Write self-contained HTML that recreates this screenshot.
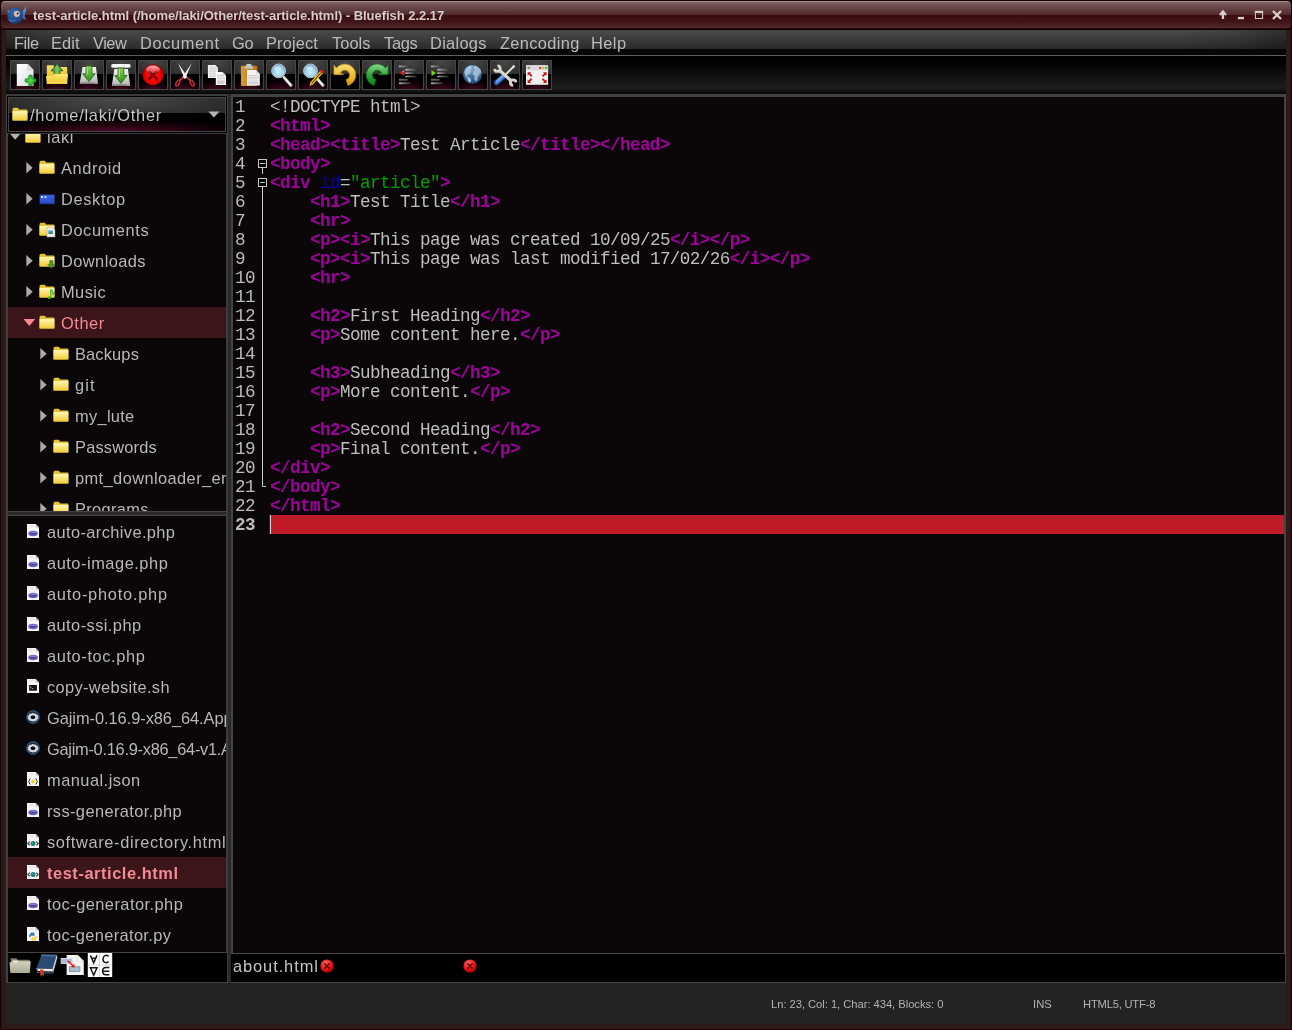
<!DOCTYPE html>
<html><head><meta charset="utf-8"><title>Bluefish</title>
<style>
html,body{margin:0;padding:0}
body{width:1292px;height:1030px;position:relative;overflow:hidden;background:#2b1b1b;font-family:"Liberation Sans",sans-serif}
.t{will-change:transform;position:absolute;white-space:pre;margin:0;padding:0}
svg{position:absolute;overflow:visible}

.tb{position:absolute;top:60px;width:28px;height:28px;border:1px solid #474747;
 background:radial-gradient(ellipse 75% 38% at 50% 104%,#4a0a26 0,rgba(60,4,28,.55) 50%,rgba(0,0,0,0) 100%),linear-gradient(rgba(0,0,0,0) 0,rgba(0,0,0,0) 46.5%,#000 46.5%,#000 100%),radial-gradient(ellipse 85% 75% at 50% 0%,#494949 0,#262626 100%)}
.tb.ng{background:linear-gradient(rgba(0,0,0,0) 0,rgba(0,0,0,0) 46.5%,#000 46.5%,#000 100%),radial-gradient(ellipse 85% 75% at 50% 0%,#494949 0,#282828 100%)}
.row{position:absolute;left:8px;width:219px;height:31px;background:#3b1519}

</style></head><body>
<div style="position:absolute;left:0px;top:0px;width:1292px;height:1030px;background:#2b1b1b"></div>
<div style="position:absolute;left:0px;top:0px;width:1px;height:1030px;background:#180507"></div>
<div style="position:absolute;left:1px;top:0px;width:1px;height:1030px;background:#300b0f"></div>
<div style="position:absolute;left:1291px;top:0px;width:1px;height:1030px;background:#180507"></div>
<div style="position:absolute;left:1290px;top:0px;width:1px;height:1030px;background:#300b0f"></div>
<div style="position:absolute;left:0px;top:1028px;width:1292px;height:1px;background:#3c1014"></div>
<div style="position:absolute;left:0px;top:1029px;width:1292px;height:1px;background:#200608"></div>
<div style="position:absolute;left:0px;top:0px;width:1292px;height:30px;background:#14040a"></div>
<div style="position:absolute;left:1px;top:1px;width:1290px;height:27px;border-radius:4px 4px 3px 3px;background:linear-gradient(#a48e8e 0,#a48e8e 1px,#7e6061 1px,#4e282b 14px,#3b0c10 14px,#3f1519 21px,#4f2729 26px,#512b2d 27px);"></div>
<div style="position:absolute;left:1px;top:28px;width:1290px;height:1px;background:#2a080a"></div>
<div style="position:absolute;left:0px;top:29px;width:1292px;height:1px;background:#0a0000"></div>
<div class="t" style="left:33.27px;top:8.00px;font:bold 13.00px/15px 'Liberation Sans';letter-spacing:-0.039px;color:#d6cccc;">test-article.html (/home/laki/Other/test-article.html) - Bluefish 2.2.17</div>
<svg style="left:4px;top:3px" width="26" height="24" viewBox="4 3 26 24"><defs><radialGradient id="fb" cx=".42" cy=".3" r=".8"><stop offset="0" stop-color="#3769a8"/><stop offset=".6" stop-color="#244c88"/><stop offset="1" stop-color="#152f58"/></radialGradient></defs><path d="M21 13.400Q23.400 9.600 26.200 6.200Q26.100 10.400 24.800 14.200Q24.500 16.800 26.200 19.800Q23.400 19.400 21.200 17.400z" fill="#4274b4"/><path d="M23.200 11Q24.800 8.800 26.200 6.200Q26.100 10.400 24.800 14.200z" fill="#6090cc"/><ellipse cx="15.150" cy="15.800" rx="7.850" ry="8.300" fill="url(#fb)"/><path d="M7.900 13.600Q6.900 11.200 7.900 9.400Q9.200 10.200 9.800 11.200z" fill="#4c7cba"/><path d="M8.200 18.900Q12.400 21.600 16.900 19.400Q13 23 9 20.800z" fill="#4474b2"/><ellipse cx="16.850" cy="13.800" rx="3.050" ry="3.100" fill="#c9bfbb"/><circle cx="17.700" cy="13.500" r=".95" fill="#1a1a22"/></svg>
<svg style="left:1215px;top:6px" width="72" height="18" viewBox="1215 6 72 18"><g stroke="#dccdcd" fill="none" stroke-width="2.2"><path d="M1222.950 18.900V12M1219.900 14.900L1222.950 11.500L1226 14.900" stroke-linecap="butt" stroke-linejoin="miter" stroke-width="2.300"/><path d="M1237.900 18.050h6.100" stroke-width="2.300"/><rect x="1255.400" y="11.400" width="7.200" height="7.100" stroke-width="1"/><path d="M1254.900 11.950h8.200" stroke-width="2.100"/><path d="M1273 11l8 8M1281 11l-8 8" stroke-width="2.300"/></g></svg>
<div style="position:absolute;left:6px;top:30px;width:1280px;height:19px;background:linear-gradient(to right,rgba(0,0,0,.36) 0,rgba(0,0,0,.12) 50px,rgba(0,0,0,0) 110px,rgba(0,0,0,0) 1170px,rgba(0,0,0,.12) 1230px,rgba(0,0,0,.36) 100%),linear-gradient(#474747 0,#484848 2px,#2b2b2b 100%)"></div>
<div style="position:absolute;left:6px;top:49px;width:1280px;height:6px;background:#070707"></div>
<div style="position:absolute;left:6px;top:55px;width:1280px;height:1px;background:#5e5e5e"></div>
<div class="t" style="left:13.79px;top:34.00px;font:normal 16.40px/18px 'Liberation Sans';letter-spacing:-0.418px;color:#bababa;">File</div>
<div class="t" style="left:50.79px;top:34.00px;font:normal 16.40px/18px 'Liberation Sans';letter-spacing:0.095px;color:#bababa;">Edit</div>
<div class="t" style="left:92.82px;top:34.00px;font:normal 16.40px/18px 'Liberation Sans';letter-spacing:-0.459px;color:#bababa;">View</div>
<div class="t" style="left:139.89px;top:34.00px;font:normal 16.40px/18px 'Liberation Sans';letter-spacing:0.627px;color:#bababa;">Document</div>
<div class="t" style="left:232.28px;top:34.00px;font:normal 16.40px/18px 'Liberation Sans';letter-spacing:-0.318px;color:#bababa;">Go</div>
<div class="t" style="left:266.19px;top:34.00px;font:normal 16.40px/18px 'Liberation Sans';letter-spacing:0.148px;color:#bababa;">Project</div>
<div class="t" style="left:331.77px;top:34.00px;font:normal 16.40px/18px 'Liberation Sans';letter-spacing:0.052px;color:#bababa;">Tools</div>
<div class="t" style="left:383.77px;top:34.00px;font:normal 16.40px/18px 'Liberation Sans';letter-spacing:-0.267px;color:#bababa;">Tags</div>
<div class="t" style="left:430.09px;top:34.00px;font:normal 16.40px/18px 'Liberation Sans';letter-spacing:0.299px;color:#bababa;">Dialogs</div>
<div class="t" style="left:499.61px;top:34.00px;font:normal 16.40px/18px 'Liberation Sans';letter-spacing:0.359px;color:#bababa;">Zencoding</div>
<div class="t" style="left:590.59px;top:34.00px;font:normal 16.40px/18px 'Liberation Sans';letter-spacing:0.455px;color:#bababa;">Help</div>
<div style="position:absolute;left:6px;top:56px;width:1280px;height:38px;background:linear-gradient(#000 0,#000 12%,#1e1e1e 84%,#0c0c0c 96%,#050505 100%)"></div>
<div class="tb" style="left:10px"></div>
<div class="tb" style="left:42px"></div>
<div class="tb" style="left:74px"></div>
<div class="tb" style="left:106px"></div>
<div class="tb" style="left:138px"></div>
<div class="tb" style="left:170px"></div>
<div class="tb" style="left:202px"></div>
<div class="tb" style="left:234px"></div>
<div class="tb" style="left:266px"></div>
<div class="tb" style="left:298px"></div>
<div class="tb ng" style="left:330px"></div>
<div class="tb ng" style="left:362px"></div>
<div class="tb" style="left:394px"></div>
<div class="tb" style="left:426px"></div>
<div class="tb" style="left:458px"></div>
<div class="tb" style="left:490px"></div>
<div class="tb" style="left:522px"></div>
<div style="position:absolute;left:6px;top:94px;width:1280px;height:889px;background:#000"></div>
<div style="position:absolute;left:6px;top:94px;width:222px;height:2px;background:#3a3a3a"></div>
<div style="position:absolute;left:6px;top:94px;width:2px;height:888px;background:#414141"></div>
<div style="position:absolute;left:227px;top:96px;width:1px;height:886px;background:#3c3c3c"></div>
<div style="position:absolute;left:226px;top:133px;width:1px;height:820px;background:#3c3c3c"></div>
<div style="position:absolute;left:228px;top:94px;width:3px;height:889px;background:#272727 repeating-linear-gradient(#2f2f2f 0,#2f2f2f 1px,#252525 1px,#252525 2px)"></div>
<div style="position:absolute;left:7px;top:96px;width:1px;height:37px;background:#000"></div>
<div style="position:absolute;left:8px;top:97px;width:218px;height:35px;box-sizing:border-box;border:1px solid #464646;background:radial-gradient(ellipse 62% 42% at 50% 106%,#5c0a2e 0,rgba(70,6,32,.5) 55%,rgba(0,0,0,0) 100%),linear-gradient(rgba(0,0,0,0) 0,rgba(0,0,0,0) 46%,#000 46%,#000 100%),radial-gradient(ellipse 75% 95% at 50% 0%,#4c4c4c 0,#1e1e1e 100%)"></div>
<div class="t" style="left:30.00px;top:106.00px;font:normal 16.40px/18px 'Liberation Sans';letter-spacing:0.730px;color:#c6c6c6;">/home/laki/Other</div>
<svg style="left:208px;top:111px" width="12" height="7"><path d="M0.3 0.6h11.2L5.9 6.6z" fill="#b4b4b4"/></svg>
<div style="position:absolute;left:8px;top:134px;width:218px;height:377px;background:#0b0708;overflow:hidden"></div>
<div style="position:absolute;left:8px;top:133px;width:218px;height:1px;background:#3a3a3a"></div>
<div style="position:absolute;left:8px;top:511px;width:218px;height:1px;background:#444"></div>
<div style="position:absolute;left:8px;top:512px;width:218px;height:3px;background:#2a2a2a"></div>
<div style="position:absolute;left:8px;top:515px;width:218px;height:1px;background:#444"></div>
<div style="position:absolute;left:8px;top:516px;width:218px;height:436px;background:#0b0708"></div>
<div style="position:absolute;left:8px;top:952px;width:218px;height:1px;background:#444"></div>
<div style="position:absolute;left:8px;top:953px;width:219px;height:29px;background:#000"></div>
<div style="position:absolute;left:6px;top:982px;width:222px;height:1px;background:#444"></div>
<div style="position:absolute;left:231px;top:94px;width:1055px;height:3px;background:#424242"></div>
<div style="position:absolute;left:231px;top:94px;width:2px;height:860px;background:#444"></div>
<div style="position:absolute;left:1284px;top:94px;width:2px;height:889px;background:#444"></div>
<div style="position:absolute;left:233px;top:97px;width:1051px;height:856px;background:#0b0708"></div>
<div style="position:absolute;left:231px;top:953px;width:1055px;height:1px;background:#484848"></div>
<div style="position:absolute;left:232px;top:954px;width:1053px;height:28px;background:#000"></div>
<div style="position:absolute;left:231px;top:982px;width:1055px;height:1px;background:#484848"></div>
<div style="position:absolute;left:6px;top:983px;width:1280px;height:41px;background:#232323"></div>
<div class="t" style="left:770.80px;top:998.00px;font:normal 11.20px/12px 'Liberation Sans';letter-spacing:-0.031px;color:#b2b2b2;">Ln: 23, Col: 1, Char: 434, Blocks: 0</div>
<div class="t" style="left:1033.39px;top:998.00px;font:normal 11.20px/12px 'Liberation Sans';letter-spacing:0.032px;color:#b2b2b2;">INS</div>
<div class="t" style="left:1082.70px;top:998.00px;font:normal 11.20px/12px 'Liberation Sans';letter-spacing:-0.200px;color:#b2b2b2;">HTML5, UTF-8</div>
<svg width="0" height="0" style="left:0;top:0"><defs><linearGradient id="fg" x1="0" y1="0" x2="0" y2="1"><stop offset="0" stop-color="#fff7b6"/><stop offset="1" stop-color="#f2cc35"/></linearGradient></defs></svg>
<div style="position:absolute;left:8px;top:134px;width:218px;height:377px;overflow:hidden">
<div style="position:absolute;left:-8px;top:-134px">
<div style="position:absolute;left:8px;top:307px;width:218px;height:31px;background:#3b1519"></div>
<svg style="left:9px;top:133px" width="13" height="8"><path d="M0.4 0H12L6.2 6.8z" fill="#b4b4b4"/></svg>
<svg style="left:25px;top:129px" width="17" height="18" viewBox="0 0 17 18"><path d="M0.5 2.600Q0.5 0.8 2 0.8H5.400Q6.300 0.8 6.800 2.200L7 2.600H14.400Q15.400 2.600 15.400 3.600V12.700Q15.400 13.600 14.500 13.600H1.400Q0.5 13.600 0.5 12.700z" fill="#e6c13a"/><path d="M0.5 3.900H15.400V12.700Q15.400 13.600 14.500 13.600H1.400Q0.5 13.600 0.5 12.700z" fill="url(#fg)"/></svg>
<div class="t" style="left:47.00px;top:128.00px;font:normal 16.40px/18px 'Liberation Sans';letter-spacing:0.589px;color:#b8b8b8;">laki</div>
<svg style="left:26px;top:162px" width="8" height="12"><path d="M0.3 0V11.400L6.700 5.700z" fill="#aaaaaa"/></svg>
<svg style="left:39px;top:160px" width="17" height="18" viewBox="0 0 17 18"><path d="M0.5 2.600Q0.5 0.8 2 0.8H5.400Q6.300 0.8 6.800 2.200L7 2.600H14.400Q15.400 2.600 15.400 3.600V12.700Q15.400 13.600 14.500 13.600H1.400Q0.5 13.600 0.5 12.700z" fill="#e6c13a"/><path d="M0.5 3.900H15.400V12.700Q15.400 13.600 14.500 13.600H1.400Q0.5 13.600 0.5 12.700z" fill="url(#fg)"/></svg>
<div class="t" style="left:61.00px;top:159.00px;font:normal 16.40px/18px 'Liberation Sans';letter-spacing:0.611px;color:#b8b8b8;">Android</div>
<svg style="left:26px;top:193px" width="8" height="12"><path d="M0.3 0V11.400L6.700 5.700z" fill="#aaaaaa"/></svg>
<svg style="left:39px;top:191px" width="17" height="18" viewBox="0 0 17 18"><rect x="0.4" y="3.3" width="15.4" height="10" fill="#1f2f66"/><rect x="1.1" y="4" width="14" height="8.4" fill="#2a52d2"/><path d="M1.1 4H15.1V7L1.1 10z" fill="#3b66e4" opacity=".6"/><circle cx="3" cy="6" r="1.1" fill="#fff"/><circle cx="6.4" cy="6" r="1.1" fill="#e8eeff"/></svg>
<div class="t" style="left:61.00px;top:190.00px;font:normal 16.40px/18px 'Liberation Sans';letter-spacing:0.658px;color:#b8b8b8;">Desktop</div>
<svg style="left:26px;top:224px" width="8" height="12"><path d="M0.3 0V11.400L6.700 5.700z" fill="#aaaaaa"/></svg>
<svg style="left:39px;top:222px" width="17" height="18" viewBox="0 0 17 18"><path d="M0.5 2.600Q0.5 0.8 2 0.8H5.400Q6.300 0.8 6.800 2.200L7 2.600H14.400Q15.400 2.600 15.400 3.600V12.700Q15.400 13.600 14.500 13.600H1.400Q0.5 13.600 0.5 12.700z" fill="#e6c13a"/><path d="M0.5 3.900H15.400V12.700Q15.400 13.600 14.500 13.600H1.400Q0.5 13.600 0.5 12.700z" fill="url(#fg)"/><path d="M8 5.2H13.2L16 8V15H8z" fill="#eeeeee" stroke="#9a9a9a" stroke-width=".5"/><rect x="9.4" y="8.4" width="4.6" height="3.4" fill="#4aa0d8"/><path d="M9.400 11.800l1.600-1.800 1.200 1 1-.8.800 1.600z" fill="#3a7a3a"/></svg>
<div class="t" style="left:61.00px;top:221.00px;font:normal 16.40px/18px 'Liberation Sans';letter-spacing:0.586px;color:#b8b8b8;">Documents</div>
<svg style="left:26px;top:255px" width="8" height="12"><path d="M0.3 0V11.400L6.700 5.700z" fill="#aaaaaa"/></svg>
<svg style="left:39px;top:253px" width="17" height="18" viewBox="0 0 17 18"><path d="M0.5 2.600Q0.5 0.8 2 0.8H5.400Q6.300 0.8 6.800 2.200L7 2.600H14.400Q15.400 2.600 15.400 3.600V12.700Q15.400 13.600 14.500 13.600H1.400Q0.5 13.600 0.5 12.700z" fill="#e6c13a"/><path d="M0.5 3.900H15.400V12.700Q15.400 13.600 14.500 13.600H1.400Q0.5 13.600 0.5 12.700z" fill="url(#fg)"/><path d="M10.800 7.600H13.800V11.400H15.800L12.300 15.200L8.800 11.400H10.800z" fill="#4a9a30" stroke="#2a6a1c" stroke-width=".6"/></svg>
<div class="t" style="left:61.00px;top:252.00px;font:normal 16.40px/18px 'Liberation Sans';letter-spacing:0.434px;color:#b8b8b8;">Downloads</div>
<svg style="left:26px;top:286px" width="8" height="12"><path d="M0.3 0V11.400L6.700 5.700z" fill="#aaaaaa"/></svg>
<svg style="left:39px;top:284px" width="17" height="18" viewBox="0 0 17 18"><path d="M0.5 2.600Q0.5 0.8 2 0.8H5.400Q6.300 0.8 6.800 2.200L7 2.600H14.400Q15.400 2.600 15.400 3.600V12.700Q15.400 13.600 14.500 13.600H1.400Q0.5 13.600 0.5 12.700z" fill="#e6c13a"/><path d="M0.5 3.900H15.400V12.700Q15.400 13.600 14.500 13.600H1.400Q0.5 13.600 0.5 12.700z" fill="url(#fg)"/><g fill="#2fae22" stroke="#2fae22"><path d="M11.800 5.600V13.400" stroke-width="1.100"/><path d="M11.800 5.600Q14.600 7.600 14.200 11" fill="none" stroke-width="1.100"/><ellipse cx="10.400" cy="13.800" rx="1.700" ry="1.200" stroke="none"/></g></svg>
<div class="t" style="left:61.00px;top:283.00px;font:normal 16.40px/18px 'Liberation Sans';letter-spacing:0.452px;color:#b8b8b8;">Music</div>
<svg style="left:23px;top:319px" width="13" height="8"><path d="M0.5 0H12.200L6.350 6.900z" fill="#f58a95"/></svg>
<svg style="left:39px;top:315px" width="17" height="18" viewBox="0 0 17 18"><path d="M0.5 2.600Q0.5 0.8 2 0.8H5.400Q6.300 0.8 6.800 2.200L7 2.600H14.400Q15.400 2.600 15.400 3.600V12.700Q15.400 13.600 14.500 13.600H1.400Q0.5 13.600 0.5 12.700z" fill="#e6c13a"/><path d="M0.5 3.900H15.400V12.700Q15.400 13.600 14.500 13.600H1.400Q0.5 13.600 0.5 12.700z" fill="url(#fg)"/></svg>
<div class="t" style="left:61.00px;top:314.00px;font:normal 16.40px/18px 'Liberation Sans';letter-spacing:0.562px;color:#f58a95;">Other</div>
<svg style="left:40px;top:348px" width="8" height="12"><path d="M0.3 0V11.400L6.700 5.700z" fill="#aaaaaa"/></svg>
<svg style="left:53px;top:346px" width="17" height="18" viewBox="0 0 17 18"><path d="M0.5 2.600Q0.5 0.8 2 0.8H5.400Q6.300 0.8 6.800 2.200L7 2.600H14.400Q15.400 2.600 15.400 3.600V12.700Q15.400 13.600 14.500 13.600H1.400Q0.5 13.600 0.5 12.700z" fill="#e6c13a"/><path d="M0.5 3.900H15.400V12.700Q15.400 13.600 14.500 13.600H1.400Q0.5 13.600 0.5 12.700z" fill="url(#fg)"/></svg>
<div class="t" style="left:75.00px;top:345.00px;font:normal 16.40px/18px 'Liberation Sans';letter-spacing:0.163px;color:#b8b8b8;">Backups</div>
<svg style="left:40px;top:379px" width="8" height="12"><path d="M0.3 0V11.400L6.700 5.700z" fill="#aaaaaa"/></svg>
<svg style="left:53px;top:377px" width="17" height="18" viewBox="0 0 17 18"><path d="M0.5 2.600Q0.5 0.8 2 0.8H5.400Q6.300 0.8 6.800 2.200L7 2.600H14.400Q15.400 2.600 15.400 3.600V12.700Q15.400 13.600 14.500 13.600H1.400Q0.5 13.600 0.5 12.700z" fill="#e6c13a"/><path d="M0.5 3.900H15.400V12.700Q15.400 13.600 14.500 13.600H1.400Q0.5 13.600 0.5 12.700z" fill="url(#fg)"/></svg>
<div class="t" style="left:75.00px;top:376.00px;font:normal 16.40px/18px 'Liberation Sans';letter-spacing:1.140px;color:#b8b8b8;">git</div>
<svg style="left:40px;top:410px" width="8" height="12"><path d="M0.3 0V11.400L6.700 5.700z" fill="#aaaaaa"/></svg>
<svg style="left:53px;top:408px" width="17" height="18" viewBox="0 0 17 18"><path d="M0.5 2.600Q0.5 0.8 2 0.8H5.400Q6.300 0.8 6.800 2.200L7 2.600H14.400Q15.400 2.600 15.400 3.600V12.700Q15.400 13.600 14.500 13.600H1.400Q0.5 13.600 0.5 12.700z" fill="#e6c13a"/><path d="M0.5 3.900H15.400V12.700Q15.400 13.600 14.500 13.600H1.400Q0.5 13.600 0.5 12.700z" fill="url(#fg)"/></svg>
<div class="t" style="left:75.00px;top:407.00px;font:normal 16.40px/18px 'Liberation Sans';letter-spacing:0.306px;color:#b8b8b8;">my_lute</div>
<svg style="left:40px;top:441px" width="8" height="12"><path d="M0.3 0V11.400L6.700 5.700z" fill="#aaaaaa"/></svg>
<svg style="left:53px;top:439px" width="17" height="18" viewBox="0 0 17 18"><path d="M0.5 2.600Q0.5 0.8 2 0.8H5.400Q6.300 0.8 6.800 2.200L7 2.600H14.400Q15.400 2.600 15.400 3.600V12.700Q15.400 13.600 14.500 13.600H1.400Q0.5 13.600 0.5 12.700z" fill="#e6c13a"/><path d="M0.5 3.900H15.400V12.700Q15.400 13.600 14.500 13.600H1.400Q0.5 13.600 0.5 12.700z" fill="url(#fg)"/></svg>
<div class="t" style="left:75.00px;top:438.00px;font:normal 16.40px/18px 'Liberation Sans';letter-spacing:0.197px;color:#b8b8b8;">Passwords</div>
<svg style="left:40px;top:472px" width="8" height="12"><path d="M0.3 0V11.400L6.700 5.700z" fill="#aaaaaa"/></svg>
<svg style="left:53px;top:470px" width="17" height="18" viewBox="0 0 17 18"><path d="M0.5 2.600Q0.5 0.8 2 0.8H5.400Q6.300 0.8 6.800 2.200L7 2.600H14.400Q15.400 2.600 15.400 3.600V12.700Q15.400 13.600 14.500 13.600H1.400Q0.5 13.600 0.5 12.700z" fill="#e6c13a"/><path d="M0.5 3.900H15.400V12.700Q15.400 13.600 14.500 13.600H1.400Q0.5 13.600 0.5 12.700z" fill="url(#fg)"/></svg>
<div class="t" style="left:75.00px;top:469.00px;font:normal 16.40px/18px 'Liberation Sans';letter-spacing:0.416px;color:#b8b8b8;">pmt_downloader_er</div>
<svg style="left:40px;top:503px" width="8" height="12"><path d="M0.3 0V11.400L6.700 5.700z" fill="#aaaaaa"/></svg>
<svg style="left:53px;top:501px" width="17" height="18" viewBox="0 0 17 18"><path d="M0.5 2.600Q0.5 0.8 2 0.8H5.400Q6.300 0.8 6.800 2.200L7 2.600H14.400Q15.400 2.600 15.400 3.600V12.700Q15.400 13.600 14.500 13.600H1.400Q0.5 13.600 0.5 12.700z" fill="#e6c13a"/><path d="M0.5 3.900H15.400V12.700Q15.400 13.600 14.500 13.600H1.400Q0.5 13.600 0.5 12.700z" fill="url(#fg)"/></svg>
<div class="t" style="left:75.00px;top:500.00px;font:normal 16.40px/18px 'Liberation Sans';letter-spacing:0.354px;color:#b8b8b8;">Programs</div>
</div></div>
<div style="position:absolute;left:8px;top:516px;width:218px;height:436px;overflow:hidden">
<div style="position:absolute;left:-8px;top:-516px">
<svg style="left:25px;top:524px" width="16" height="16" viewBox="0 0 16 16"><path d="M2 0H10.600L14 3.400V14H2z" fill="#f6f6f6"/><path d="M10.600 0V3.400H14z" fill="#c2c2c2"/><path d="M3.400 1.400H9M3.400 2.800H9" stroke="#dcdcdc" stroke-width=".7"/><ellipse cx="8.100" cy="9.500" rx="4.800" ry="2.700" fill="#6f62bd"/><ellipse cx="8.100" cy="9.700" rx="3.200" ry="1.100" fill="#4e4399"/><ellipse cx="8.100" cy="8.300" rx="3" ry=".8" fill="#9a8fdc" opacity=".8"/></svg>
<div class="t" style="left:47.10px;top:523.00px;font:normal 16.40px/18px 'Liberation Sans';letter-spacing:0.392px;color:#b8b8b8;">auto-archive.php</div>
<svg style="left:25px;top:555px" width="16" height="16" viewBox="0 0 16 16"><path d="M2 0H10.600L14 3.400V14H2z" fill="#f6f6f6"/><path d="M10.600 0V3.400H14z" fill="#c2c2c2"/><path d="M3.400 1.400H9M3.400 2.800H9" stroke="#dcdcdc" stroke-width=".7"/><ellipse cx="8.100" cy="9.500" rx="4.800" ry="2.700" fill="#6f62bd"/><ellipse cx="8.100" cy="9.700" rx="3.200" ry="1.100" fill="#4e4399"/><ellipse cx="8.100" cy="8.300" rx="3" ry=".8" fill="#9a8fdc" opacity=".8"/></svg>
<div class="t" style="left:47.10px;top:554.00px;font:normal 16.40px/18px 'Liberation Sans';letter-spacing:0.529px;color:#b8b8b8;">auto-image.php</div>
<svg style="left:25px;top:586px" width="16" height="16" viewBox="0 0 16 16"><path d="M2 0H10.600L14 3.400V14H2z" fill="#f6f6f6"/><path d="M10.600 0V3.400H14z" fill="#c2c2c2"/><path d="M3.400 1.400H9M3.400 2.800H9" stroke="#dcdcdc" stroke-width=".7"/><ellipse cx="8.100" cy="9.500" rx="4.800" ry="2.700" fill="#6f62bd"/><ellipse cx="8.100" cy="9.700" rx="3.200" ry="1.100" fill="#4e4399"/><ellipse cx="8.100" cy="8.300" rx="3" ry=".8" fill="#9a8fdc" opacity=".8"/></svg>
<div class="t" style="left:47.10px;top:585.00px;font:normal 16.40px/18px 'Liberation Sans';letter-spacing:0.751px;color:#b8b8b8;">auto-photo.php</div>
<svg style="left:25px;top:617px" width="16" height="16" viewBox="0 0 16 16"><path d="M2 0H10.600L14 3.400V14H2z" fill="#f6f6f6"/><path d="M10.600 0V3.400H14z" fill="#c2c2c2"/><path d="M3.400 1.400H9M3.400 2.800H9" stroke="#dcdcdc" stroke-width=".7"/><ellipse cx="8.100" cy="9.500" rx="4.800" ry="2.700" fill="#6f62bd"/><ellipse cx="8.100" cy="9.700" rx="3.200" ry="1.100" fill="#4e4399"/><ellipse cx="8.100" cy="8.300" rx="3" ry=".8" fill="#9a8fdc" opacity=".8"/></svg>
<div class="t" style="left:47.10px;top:616.00px;font:normal 16.40px/18px 'Liberation Sans';letter-spacing:0.433px;color:#b8b8b8;">auto-ssi.php</div>
<svg style="left:25px;top:648px" width="16" height="16" viewBox="0 0 16 16"><path d="M2 0H10.600L14 3.400V14H2z" fill="#f6f6f6"/><path d="M10.600 0V3.400H14z" fill="#c2c2c2"/><path d="M3.400 1.400H9M3.400 2.800H9" stroke="#dcdcdc" stroke-width=".7"/><ellipse cx="8.100" cy="9.500" rx="4.800" ry="2.700" fill="#6f62bd"/><ellipse cx="8.100" cy="9.700" rx="3.200" ry="1.100" fill="#4e4399"/><ellipse cx="8.100" cy="8.300" rx="3" ry=".8" fill="#9a8fdc" opacity=".8"/></svg>
<div class="t" style="left:47.10px;top:647.00px;font:normal 16.40px/18px 'Liberation Sans';letter-spacing:0.607px;color:#b8b8b8;">auto-toc.php</div>
<svg style="left:25px;top:679px" width="16" height="16" viewBox="0 0 16 16"><path d="M2 0H10.600L14 3.400V14H2z" fill="#f6f6f6"/><path d="M10.600 0V3.400H14z" fill="#c2c2c2"/><path d="M3.400 1.400H9M3.400 2.800H9" stroke="#dcdcdc" stroke-width=".7"/><rect x="4.100" y="6" width="7.800" height="5.700" fill="#111"/><path d="M5 7.600l1.200 .8-1.200 .8" stroke="#e8e8e8" stroke-width=".7" fill="none"/><path d="M6.800 9.600h1.600" stroke="#e8e8e8" stroke-width=".7"/></svg>
<div class="t" style="left:47.10px;top:678.00px;font:normal 16.40px/18px 'Liberation Sans';letter-spacing:0.356px;color:#b8b8b8;">copy-website.sh</div>
<svg style="left:25px;top:710px" width="16" height="16" viewBox="0 0 16 16"><circle cx="8" cy="7" r="6.800" fill="#1c2e44"/><circle cx="8" cy="7" r="6.200" fill="none" stroke="#3c6288" stroke-width="1"/><g transform="translate(8 7.300) scale(1 .78)"><circle r="4" fill="none" stroke="#d9dde2" stroke-width="2.900" stroke-dasharray="1.800 .65"/><circle r="3.600" fill="none" stroke="#d9dde2" stroke-width="2.200"/></g><ellipse cx="8" cy="7.300" rx="2.400" ry="1.450" fill="#0a0a0c"/></svg>
<div class="t" style="left:47.10px;top:709.00px;font:normal 16.40px/18px 'Liberation Sans';letter-spacing:-0.051px;color:#b8b8b8;">Gajim-0.16.9-x86_64.App</div>
<svg style="left:25px;top:741px" width="16" height="16" viewBox="0 0 16 16"><circle cx="8" cy="7" r="6.800" fill="#1c2e44"/><circle cx="8" cy="7" r="6.200" fill="none" stroke="#3c6288" stroke-width="1"/><g transform="translate(8 7.300) scale(1 .78)"><circle r="4" fill="none" stroke="#d9dde2" stroke-width="2.900" stroke-dasharray="1.800 .65"/><circle r="3.600" fill="none" stroke="#d9dde2" stroke-width="2.200"/></g><ellipse cx="8" cy="7.300" rx="2.400" ry="1.450" fill="#0a0a0c"/></svg>
<div class="t" style="left:47.10px;top:740.00px;font:normal 16.40px/18px 'Liberation Sans';letter-spacing:-0.273px;color:#b8b8b8;">Gajim-0.16.9-x86_64-v1.A</div>
<svg style="left:25px;top:772px" width="16" height="16" viewBox="0 0 16 16"><path d="M2 0H10.600L14 3.400V14H2z" fill="#f6f6f6"/><path d="M10.600 0V3.400H14z" fill="#c2c2c2"/><path d="M3.400 1.400H9M3.400 2.800H9" stroke="#dcdcdc" stroke-width=".7"/><path d="M5.400 6.600Q4.200 6.600 4.400 7.800T3.500 9.500Q4.600 9.700 4.400 11T5.400 12.300M10.600 6.600Q11.800 6.600 11.600 7.800T12.500 9.500Q11.400 9.700 11.600 11T10.600 12.300" stroke="#333" stroke-width="1" fill="none"/><circle cx="8" cy="9.500" r="1.900" fill="#f6cf2e"/></svg>
<div class="t" style="left:47.10px;top:771.00px;font:normal 16.40px/18px 'Liberation Sans';letter-spacing:0.477px;color:#b8b8b8;">manual.json</div>
<svg style="left:25px;top:803px" width="16" height="16" viewBox="0 0 16 16"><path d="M2 0H10.600L14 3.400V14H2z" fill="#f6f6f6"/><path d="M10.600 0V3.400H14z" fill="#c2c2c2"/><path d="M3.400 1.400H9M3.400 2.800H9" stroke="#dcdcdc" stroke-width=".7"/><ellipse cx="8.100" cy="9.500" rx="4.800" ry="2.700" fill="#6f62bd"/><ellipse cx="8.100" cy="9.700" rx="3.200" ry="1.100" fill="#4e4399"/><ellipse cx="8.100" cy="8.300" rx="3" ry=".8" fill="#9a8fdc" opacity=".8"/></svg>
<div class="t" style="left:47.10px;top:802.00px;font:normal 16.40px/18px 'Liberation Sans';letter-spacing:0.391px;color:#b8b8b8;">rss-generator.php</div>
<svg style="left:25px;top:834px" width="16" height="16" viewBox="0 0 16 16"><path d="M2 0H10.600L14 3.400V14H2z" fill="#f6f6f6"/><path d="M10.600 0V3.400H14z" fill="#c2c2c2"/><path d="M3.400 1.400H9M3.400 2.800H9" stroke="#dcdcdc" stroke-width=".7"/><circle cx="8" cy="9.500" r="2.500" fill="#1c66b8"/><path d="M7 7.600q1.600 .4 1.200 1.600t-1.400 1.200q-.8-1.400 .2-2.800z" fill="#3fae4a"/><path d="M9 10q.8-.4 1.200 .4l-.8 1z" fill="#3fae4a"/><path d="M4.700 7.700L2.900 9.500L4.700 11.300M11.300 7.700L13.100 9.500L11.300 11.300" stroke="#3a3a3a" stroke-width="1.200" fill="none"/></svg>
<div class="t" style="left:47.10px;top:833.00px;font:normal 16.40px/18px 'Liberation Sans';letter-spacing:0.637px;color:#b8b8b8;">software-directory.html</div>
<div style="position:absolute;left:8px;top:857px;width:218px;height:31px;background:#3b1519"></div>
<svg style="left:25px;top:865px" width="16" height="16" viewBox="0 0 16 16"><path d="M2 0H10.600L14 3.400V14H2z" fill="#f6f6f6"/><path d="M10.600 0V3.400H14z" fill="#c2c2c2"/><path d="M3.400 1.400H9M3.400 2.800H9" stroke="#dcdcdc" stroke-width=".7"/><circle cx="8" cy="9.500" r="2.500" fill="#1c66b8"/><path d="M7 7.600q1.600 .4 1.200 1.600t-1.400 1.200q-.8-1.400 .2-2.800z" fill="#3fae4a"/><path d="M9 10q.8-.4 1.200 .4l-.8 1z" fill="#3fae4a"/><path d="M4.700 7.700L2.900 9.500L4.700 11.300M11.300 7.700L13.100 9.500L11.300 11.300" stroke="#3a3a3a" stroke-width="1.200" fill="none"/></svg>
<div class="t" style="left:47.10px;top:864.00px;font:bold 16.40px/18px 'Liberation Sans';letter-spacing:0.561px;color:#f58a95;">test-article.html</div>
<svg style="left:25px;top:896px" width="16" height="16" viewBox="0 0 16 16"><path d="M2 0H10.600L14 3.400V14H2z" fill="#f6f6f6"/><path d="M10.600 0V3.400H14z" fill="#c2c2c2"/><path d="M3.400 1.400H9M3.400 2.800H9" stroke="#dcdcdc" stroke-width=".7"/><ellipse cx="8.100" cy="9.500" rx="4.800" ry="2.700" fill="#6f62bd"/><ellipse cx="8.100" cy="9.700" rx="3.200" ry="1.100" fill="#4e4399"/><ellipse cx="8.100" cy="8.300" rx="3" ry=".8" fill="#9a8fdc" opacity=".8"/></svg>
<div class="t" style="left:47.10px;top:895.00px;font:normal 16.40px/18px 'Liberation Sans';letter-spacing:0.455px;color:#b8b8b8;">toc-generator.php</div>
<svg style="left:25px;top:927px" width="16" height="16" viewBox="0 0 16 16"><path d="M2 0H10.600L14 3.400V14H2z" fill="#f6f6f6"/><path d="M10.600 0V3.400H14z" fill="#c2c2c2"/><path d="M3.400 1.400H9M3.400 2.800H9" stroke="#dcdcdc" stroke-width=".7"/><path d="M5.200 6.600Q5.200 5.600 6.400 5.600H8.400Q9.600 5.600 9.600 6.800V8.800H6.600Q5.600 8.800 5.600 10H4.800Q4 10 4 8.800T5.200 7.600z" fill="#3f7bb4"/><path d="M10.800 12.400Q10.800 13.400 9.600 13.400H7.600Q6.400 13.400 6.400 12.200V10.200H9.400Q10.400 10.200 10.400 9H11.200Q12 9 12 10.200T10.800 11.400z" fill="#f6cf3e"/></svg>
<div class="t" style="left:47.10px;top:926.00px;font:normal 16.40px/18px 'Liberation Sans';letter-spacing:0.361px;color:#b8b8b8;">toc-generator.py</div>
</div></div>
<svg style="left:12.3px;top:107.2px" width="17" height="18" viewBox="0 0 17 18"><path d="M0.5 2.600Q0.5 0.8 2 0.8H5.400Q6.300 0.8 6.800 2.200L7 2.600H14.400Q15.400 2.600 15.400 3.600V12.700Q15.400 13.600 14.500 13.600H1.400Q0.5 13.600 0.5 12.700z" fill="#e6c13a"/><path d="M0.5 3.900H15.400V12.700Q15.400 13.600 14.500 13.600H1.400Q0.5 13.600 0.5 12.700z" fill="url(#fg)"/></svg>
<svg style="left:8px;top:953px" width="110" height="28" viewBox="8 953 110 28"><defs><linearGradient id="gof" x1="0" y1="0" x2="0" y2="1"><stop offset="0" stop-color="#d2d4be"/><stop offset="1" stop-color="#a9ab95"/></linearGradient></defs><path d="M10.600 959.200Q10.600 958.200 11.600 958.200H16.400L17.600 959.800H29Q29.800 959.800 29.800 960.600V964H10.600z" fill="#7e806a"/><path d="M12.600 960.400H17.800L18.800 961.600V963H12.600z" fill="#f2f2ee"/><path d="M9.500 962.300H16.800L18.400 961.200H30.700L29.900 972.500Q29.800 973.100 29.100 973.100H11.100Q10.400 973.100 10.300 972.500z" fill="url(#gof)"/><path d="M41.600 954.400L56.600 954.800L52.400 969L36.400 968.600z" fill="#2a4b73"/><path d="M41.600 954.400L56.600 954.800L56 956.600L41 956.200z" fill="#456f9c"/><path d="M56.600 954.800L57.400 957.400L53.600 971.400L52.400 969z" fill="#c8ccd0"/><path d="M36.400 968.600L52.400 969L53.600 971.400L37.600 971z" fill="#e8eaec"/><path d="M36.400 968.600L37.600 971L37.600 972.600L52.800 973L53.600 971.400" fill="none" stroke="#3c628c" stroke-width="1.200"/><path d="M40 969.400L43.400 969.500L44 976.600L42.200 974.800L40.600 976.800z" fill="#d8401c"/><path d="M66.600 955H77.600L83.800 961.200V975H66.600z" fill="#f4f3ee"/><path d="M77.600 955V961.200H83.800z" fill="#fff" stroke="#c8c8c0" stroke-width=".5"/><rect x="61.200" y="958.400" width="11" height="5" fill="#a9bcd3" stroke="#dfe6ee" stroke-width=".9"/><rect x="69.400" y="966.800" width="10.400" height="4.600" fill="#a9bcd3" stroke="#7d90ac" stroke-width=".9"/><path d="M68.400 961.600L73.600 966.400" stroke="#f01010" stroke-width="1.400"/><path d="M74.800 967.600L71 967L74.200 963.800z" fill="#f01010"/><circle cx="68.400" cy="961.600" r="1" fill="#f01010"/><rect x="87.800" y="953" width="24.400" height="24" fill="#fdfdfd"/><path d="M99.400 953V977M87.800 965H112.200" stroke="#c8c8c8" stroke-width=".8"/><g stroke="#161616" stroke-width="1.500" fill="none"><path d="M90.400 955.400L93.700 962.800L97 955.400M91.600 958.200H95.800"/><path d="M108.600 956.400Q106.800 954.800 105 955.600T103 959T105 962.400T108.600 961.600"/><path d="M90.400 967.800H97L93.700 975.200z"/><path d="M109.400 967.600H106Q102.600 967.800 102.600 971.200T106 974.800H109.400M102.600 971.200H109.400"/></g></svg>
<div style="position:absolute;left:269px;top:515px;width:1px;height:19px;background:#5c0c12"></div>
<div style="position:absolute;left:270px;top:515px;width:1014px;height:19px;background:#c01c28"></div>
<div style="position:absolute;left:270px;top:515px;width:1px;height:19px;background:#d4d4d4"></div>
<div class="t" style="left:235px;top:97px;font:normal 17.6px/20px 'Liberation Mono';letter-spacing:-0.5617px;color:#bcbcbc">1</div>
<div class="t" style="left:269.6px;top:97px;font:normal 17.6px/20px 'Liberation Mono';letter-spacing:-0.5617px"><span style="color:#bebebe;">&lt;!DOCTYPE html&gt;</span></div>
<div class="t" style="left:235px;top:116px;font:normal 17.6px/20px 'Liberation Mono';letter-spacing:-0.5617px;color:#bcbcbc">2</div>
<div class="t" style="left:269.6px;top:116px;font:normal 17.6px/20px 'Liberation Mono';letter-spacing:-0.5617px"><span style="color:#a0009e;font-weight:bold">&lt;html&gt;</span></div>
<div class="t" style="left:235px;top:135px;font:normal 17.6px/20px 'Liberation Mono';letter-spacing:-0.5617px;color:#bcbcbc">3</div>
<div class="t" style="left:269.6px;top:135px;font:normal 17.6px/20px 'Liberation Mono';letter-spacing:-0.5617px"><span style="color:#a0009e;font-weight:bold">&lt;head&gt;&lt;title&gt;</span><span style="color:#bebebe;">Test Article</span><span style="color:#a0009e;font-weight:bold">&lt;/title&gt;&lt;/head&gt;</span></div>
<div class="t" style="left:235px;top:154px;font:normal 17.6px/20px 'Liberation Mono';letter-spacing:-0.5617px;color:#bcbcbc">4</div>
<div class="t" style="left:269.6px;top:154px;font:normal 17.6px/20px 'Liberation Mono';letter-spacing:-0.5617px"><span style="color:#a0009e;font-weight:bold">&lt;body&gt;</span></div>
<div class="t" style="left:235px;top:173px;font:normal 17.6px/20px 'Liberation Mono';letter-spacing:-0.5617px;color:#bcbcbc">5</div>
<div class="t" style="left:269.6px;top:173px;font:normal 17.6px/20px 'Liberation Mono';letter-spacing:-0.5617px"><span style="color:#a0009e;font-weight:bold">&lt;div </span><span style="color:#0000a8;">id</span><span style="color:#bebebe;">=</span><span style="color:#00a000;">"article"</span><span style="color:#a0009e;font-weight:bold">&gt;</span></div>
<div class="t" style="left:235px;top:192px;font:normal 17.6px/20px 'Liberation Mono';letter-spacing:-0.5617px;color:#bcbcbc">6</div>
<div class="t" style="left:269.6px;top:192px;font:normal 17.6px/20px 'Liberation Mono';letter-spacing:-0.5617px"><span style="color:#bebebe;">    </span><span style="color:#a0009e;font-weight:bold">&lt;h1&gt;</span><span style="color:#bebebe;">Test Title</span><span style="color:#a0009e;font-weight:bold">&lt;/h1&gt;</span></div>
<div class="t" style="left:235px;top:211px;font:normal 17.6px/20px 'Liberation Mono';letter-spacing:-0.5617px;color:#bcbcbc">7</div>
<div class="t" style="left:269.6px;top:211px;font:normal 17.6px/20px 'Liberation Mono';letter-spacing:-0.5617px"><span style="color:#bebebe;">    </span><span style="color:#a0009e;font-weight:bold">&lt;hr&gt;</span></div>
<div class="t" style="left:235px;top:230px;font:normal 17.6px/20px 'Liberation Mono';letter-spacing:-0.5617px;color:#bcbcbc">8</div>
<div class="t" style="left:269.6px;top:230px;font:normal 17.6px/20px 'Liberation Mono';letter-spacing:-0.5617px"><span style="color:#bebebe;">    </span><span style="color:#a0009e;font-weight:bold">&lt;p&gt;&lt;i&gt;</span><span style="color:#bebebe;">This page was created 10/09/25</span><span style="color:#a0009e;font-weight:bold">&lt;/i&gt;&lt;/p&gt;</span></div>
<div class="t" style="left:235px;top:249px;font:normal 17.6px/20px 'Liberation Mono';letter-spacing:-0.5617px;color:#bcbcbc">9</div>
<div class="t" style="left:269.6px;top:249px;font:normal 17.6px/20px 'Liberation Mono';letter-spacing:-0.5617px"><span style="color:#bebebe;">    </span><span style="color:#a0009e;font-weight:bold">&lt;p&gt;&lt;i&gt;</span><span style="color:#bebebe;">This page was last modified 17/02/26</span><span style="color:#a0009e;font-weight:bold">&lt;/i&gt;&lt;/p&gt;</span></div>
<div class="t" style="left:235px;top:268px;font:normal 17.6px/20px 'Liberation Mono';letter-spacing:-0.5617px;color:#bcbcbc">10</div>
<div class="t" style="left:269.6px;top:268px;font:normal 17.6px/20px 'Liberation Mono';letter-spacing:-0.5617px"><span style="color:#bebebe;">    </span><span style="color:#a0009e;font-weight:bold">&lt;hr&gt;</span></div>
<div class="t" style="left:235px;top:287px;font:normal 17.6px/20px 'Liberation Mono';letter-spacing:-0.5617px;color:#bcbcbc">11</div>
<div class="t" style="left:235px;top:306px;font:normal 17.6px/20px 'Liberation Mono';letter-spacing:-0.5617px;color:#bcbcbc">12</div>
<div class="t" style="left:269.6px;top:306px;font:normal 17.6px/20px 'Liberation Mono';letter-spacing:-0.5617px"><span style="color:#bebebe;">    </span><span style="color:#a0009e;font-weight:bold">&lt;h2&gt;</span><span style="color:#bebebe;">First Heading</span><span style="color:#a0009e;font-weight:bold">&lt;/h2&gt;</span></div>
<div class="t" style="left:235px;top:325px;font:normal 17.6px/20px 'Liberation Mono';letter-spacing:-0.5617px;color:#bcbcbc">13</div>
<div class="t" style="left:269.6px;top:325px;font:normal 17.6px/20px 'Liberation Mono';letter-spacing:-0.5617px"><span style="color:#bebebe;">    </span><span style="color:#a0009e;font-weight:bold">&lt;p&gt;</span><span style="color:#bebebe;">Some content here.</span><span style="color:#a0009e;font-weight:bold">&lt;/p&gt;</span></div>
<div class="t" style="left:235px;top:344px;font:normal 17.6px/20px 'Liberation Mono';letter-spacing:-0.5617px;color:#bcbcbc">14</div>
<div class="t" style="left:235px;top:363px;font:normal 17.6px/20px 'Liberation Mono';letter-spacing:-0.5617px;color:#bcbcbc">15</div>
<div class="t" style="left:269.6px;top:363px;font:normal 17.6px/20px 'Liberation Mono';letter-spacing:-0.5617px"><span style="color:#bebebe;">    </span><span style="color:#a0009e;font-weight:bold">&lt;h3&gt;</span><span style="color:#bebebe;">Subheading</span><span style="color:#a0009e;font-weight:bold">&lt;/h3&gt;</span></div>
<div class="t" style="left:235px;top:382px;font:normal 17.6px/20px 'Liberation Mono';letter-spacing:-0.5617px;color:#bcbcbc">16</div>
<div class="t" style="left:269.6px;top:382px;font:normal 17.6px/20px 'Liberation Mono';letter-spacing:-0.5617px"><span style="color:#bebebe;">    </span><span style="color:#a0009e;font-weight:bold">&lt;p&gt;</span><span style="color:#bebebe;">More content.</span><span style="color:#a0009e;font-weight:bold">&lt;/p&gt;</span></div>
<div class="t" style="left:235px;top:401px;font:normal 17.6px/20px 'Liberation Mono';letter-spacing:-0.5617px;color:#bcbcbc">17</div>
<div class="t" style="left:235px;top:420px;font:normal 17.6px/20px 'Liberation Mono';letter-spacing:-0.5617px;color:#bcbcbc">18</div>
<div class="t" style="left:269.6px;top:420px;font:normal 17.6px/20px 'Liberation Mono';letter-spacing:-0.5617px"><span style="color:#bebebe;">    </span><span style="color:#a0009e;font-weight:bold">&lt;h2&gt;</span><span style="color:#bebebe;">Second Heading</span><span style="color:#a0009e;font-weight:bold">&lt;/h2&gt;</span></div>
<div class="t" style="left:235px;top:439px;font:normal 17.6px/20px 'Liberation Mono';letter-spacing:-0.5617px;color:#bcbcbc">19</div>
<div class="t" style="left:269.6px;top:439px;font:normal 17.6px/20px 'Liberation Mono';letter-spacing:-0.5617px"><span style="color:#bebebe;">    </span><span style="color:#a0009e;font-weight:bold">&lt;p&gt;</span><span style="color:#bebebe;">Final content.</span><span style="color:#a0009e;font-weight:bold">&lt;/p&gt;</span></div>
<div class="t" style="left:235px;top:458px;font:normal 17.6px/20px 'Liberation Mono';letter-spacing:-0.5617px;color:#bcbcbc">20</div>
<div class="t" style="left:269.6px;top:458px;font:normal 17.6px/20px 'Liberation Mono';letter-spacing:-0.5617px"><span style="color:#a0009e;font-weight:bold">&lt;/div&gt;</span></div>
<div class="t" style="left:235px;top:477px;font:normal 17.6px/20px 'Liberation Mono';letter-spacing:-0.5617px;color:#bcbcbc">21</div>
<div class="t" style="left:269.6px;top:477px;font:normal 17.6px/20px 'Liberation Mono';letter-spacing:-0.5617px"><span style="color:#a0009e;font-weight:bold">&lt;/body&gt;</span></div>
<div class="t" style="left:235px;top:496px;font:normal 17.6px/20px 'Liberation Mono';letter-spacing:-0.5617px;color:#bcbcbc">22</div>
<div class="t" style="left:269.6px;top:496px;font:normal 17.6px/20px 'Liberation Mono';letter-spacing:-0.5617px"><span style="color:#a0009e;font-weight:bold">&lt;/html&gt;</span></div>
<div class="t" style="left:235px;top:515px;font:bold 17.6px/20px 'Liberation Mono';letter-spacing:-0.5617px;color:#bcbcbc">23</div>
<svg style="left:255px;top:150px" width="16" height="350" viewBox="255 150 16 350"><g stroke="#c9c9c9" stroke-width="1" fill="none"><rect x="258.5" y="159.5" width="8" height="8" fill="#000"/><path d="M260 163.5h5M262.5 168v6"/><rect x="258.5" y="178.5" width="8" height="8" fill="#000"/><path d="M260 182.5h5M262.5 187V486.5H266"/></g></svg>
<div class="t" style="left:232.74px;top:957.00px;font:normal 16.40px/18px 'Liberation Sans';letter-spacing:0.924px;color:#c6c6c6;">about.html</div>
<svg style="left:320px;top:959px" width="14" height="14" viewBox="0 0 14 14"><defs><radialGradient id="rg" cx="0.4" cy="0.3" r="0.8"><stop offset="0" stop-color="#ff6a6a"/><stop offset="0.6" stop-color="#e01010"/><stop offset="1" stop-color="#900000"/></radialGradient></defs><circle cx="7" cy="7" r="6.6" fill="url(#rg)"/><path d="M4.4 4.4l5.2 5.2M9.6 4.4l-5.2 5.2" stroke="#7a0000" stroke-width="1.6"/></svg>
<svg style="left:463px;top:959px" width="14" height="14" viewBox="0 0 14 14"><defs><radialGradient id="rg" cx="0.4" cy="0.3" r="0.8"><stop offset="0" stop-color="#ff6a6a"/><stop offset="0.6" stop-color="#e01010"/><stop offset="1" stop-color="#900000"/></radialGradient></defs><circle cx="7" cy="7" r="6.6" fill="url(#rg)"/><path d="M4.4 4.4l5.2 5.2M9.6 4.4l-5.2 5.2" stroke="#7a0000" stroke-width="1.6"/></svg>
<svg style="left:0;top:56px" width="560" height="38" viewBox="0 56 560 38"><defs><linearGradient id="gpage" x1="0" y1="0" x2="1" y2="1"><stop offset="0" stop-color="#fff"/><stop offset="1" stop-color="#dcdcdc"/></linearGradient><linearGradient id="gfold" x1="0" y1="0" x2="0" y2="1"><stop offset="0" stop-color="#ffe977"/><stop offset="1" stop-color="#efc326"/></linearGradient><linearGradient id="ggreen" x1="0" y1="0" x2="0" y2="1"><stop offset="0" stop-color="#8fd05a"/><stop offset="1" stop-color="#2c8c1c"/></linearGradient><linearGradient id="gdrive" x1="0" y1="0" x2="0" y2="1"><stop offset="0" stop-color="#f4f4f4"/><stop offset="1" stop-color="#b4b4b4"/></linearGradient><radialGradient id="gred" cx=".5" cy=".55" r=".55"><stop offset="0" stop-color="#ff1a1a"/><stop offset=".7" stop-color="#f00000"/><stop offset="1" stop-color="#c40000"/></radialGradient><radialGradient id="lens" cx=".5" cy=".58" r=".55"><stop offset="0" stop-color="#c6f2f2"/><stop offset=".55" stop-color="#a6d6f0"/><stop offset="1" stop-color="#6ea4e2"/></radialGradient><linearGradient id="gundo" x1="0" y1="0" x2="0" y2="1"><stop offset="0" stop-color="#f8de80"/><stop offset=".5" stop-color="#f0c030"/><stop offset="1" stop-color="#d89a08"/></linearGradient><linearGradient id="gredo" x1="0" y1="0" x2="0" y2="1"><stop offset="0" stop-color="#8cd68c"/><stop offset=".5" stop-color="#2ca83a"/><stop offset="1" stop-color="#0c8214"/></linearGradient><radialGradient id="gglobe" cx=".4" cy=".2" r=".85"><stop offset="0" stop-color="#9ab8d8"/><stop offset=".5" stop-color="#43739f"/><stop offset="1" stop-color="#1f4a78"/></radialGradient><linearGradient id="gboard" x1="0" y1="0" x2="1" y2="0"><stop offset="0" stop-color="#d69a3a"/><stop offset="1" stop-color="#b87818"/></linearGradient><linearGradient id="gl" x1="0" y1="0" x2="1" y2="0"><stop offset="0" stop-color="#b4b4b4"/><stop offset=".4" stop-color="#727272"/><stop offset="1" stop-color="#242424"/></linearGradient><linearGradient id="gl2" x1="0" y1="0" x2="1" y2="0"><stop offset="0" stop-color="#6a6a6a"/><stop offset="1" stop-color="#4a4a4a"/></linearGradient><radialGradient id="gplus" cx=".5" cy=".5" r=".6"><stop offset="0" stop-color="#62dc50"/><stop offset="1" stop-color="#12a01a"/></radialGradient><linearGradient id="gfoldb" x1="0" y1="0" x2="0" y2="1"><stop offset="0" stop-color="#f9e070"/><stop offset="1" stop-color="#eec020"/></linearGradient><linearGradient id="garr" x1="0" y1="0" x2="1" y2="0"><stop offset="0" stop-color="#3f8c30"/><stop offset=".5" stop-color="#7cc060"/><stop offset="1" stop-color="#3f8c30"/></linearGradient><linearGradient id="ggloss" x1="0" y1="0" x2="0" y2="1"><stop offset="0" stop-color="#fff" stop-opacity=".7"/><stop offset="1" stop-color="#fff" stop-opacity=".12"/></linearGradient></defs><path d="M17.400 64.100H27.800L33.500 69.900V86H16.800V64.700Q16.800 64.100 17.400 64.100z" fill="url(#gpage)"/><path d="M27.800 64.100V69.900H33.500z" fill="#dedede"/><path d="M27.800 64.100V69.900H33.500" fill="none" stroke="#bcbcbc" stroke-width=".5"/><path d="M28.700 76Q28.700 75 30.500 75T32.300 76V78.700H35Q36 78.700 36 80.500T35 82.300H32.300V85Q32.300 86 30.500 86T28.700 85V82.300H26Q25 82.300 25 80.500T26 78.700H28.700z" fill="url(#gplus)" stroke="#0c8412" stroke-width=".7"/><path d="M46.800 66.200Q46.800 65.200 47.800 65.200H53.400L54.400 67H66.400Q67.200 67 67.200 67.800V77H46.800z" fill="url(#gfoldb)"/><path d="M57 64.100L62.900 70.800H59.800V75.400H54.200V70.800H51.100z" fill="url(#garr)" stroke="#1d5c1d" stroke-width=".9" stroke-linejoin="round"/><path d="M46 75.900H53L54 74.100H68L67.200 84H46.800z" fill="url(#gfold)"/><path d="M46.800 82.600H67.300" stroke="#fff3a8" stroke-width=".8" opacity=".7"/><path d="M82.600 66.900H95.900L97.800 81.600V84H79.900V81.600z" fill="url(#gdrive)"/><path d="M79.900 82.300H97.800V84H79.900z" fill="#9c9c9c"/><path d="M80.800 83.150H82.800M83.600 83.150H94" stroke="#5a5a5a" stroke-width=".7"/><circle cx="95.500" cy="83.200" r=".7" fill="#4cd040"/><path d="M86 65.900H91.900V73.800H95.100L88.950 81.600L82.700 73.800H86z" fill="url(#ggreen)" stroke="#1f6e12" stroke-width=".9" stroke-linejoin="round"/><path d="M87.300 66.800V74.600" stroke="#c4e8a0" stroke-width="1.300" opacity=".7"/><rect x="111.100" y="64.100" width="19.600" height="3.700" rx="1.800" fill="#f6f6f6"/><path d="M124.300 64.400V67.500" stroke="#d0d0d0" stroke-width=".7"/><path d="M114.400 69H127.900L130 83.700V86H112.100V83.700z" fill="url(#gdrive)"/><path d="M112.100 84.300H130V86H112.100z" fill="#9c9c9c"/><path d="M113 85.150H115M115.800 85.150H126.200" stroke="#5a5a5a" stroke-width=".7"/><circle cx="127.700" cy="85.200" r=".7" fill="#4cd040"/><path d="M118 68H123.800V75.600H127L120.900 83.400L114.800 75.600H118z" fill="url(#ggreen)" stroke="#1f6e12" stroke-width=".9" stroke-linejoin="round"/><path d="M119.300 68.900V76.400" stroke="#c4e8a0" stroke-width="1.300" opacity=".7"/><circle cx="152.960" cy="74.850" r="10.600" fill="#8e0000"/><circle cx="152.960" cy="74.850" r="9.900" fill="url(#gred)"/><path d="M148.600 70.700L157.400 79.500M157.400 70.700L148.600 79.500" stroke="#7c0000" stroke-width="2.600"/><ellipse cx="152.960" cy="69.500" rx="6.900" ry="3.900" fill="url(#ggloss)"/><g stroke="#d63434" stroke-width="1.250" fill="none"><ellipse cx="177.750" cy="83.100" rx="1.500" ry="3.150" transform="rotate(31 177.750 83.100)"/><ellipse cx="192.050" cy="83.100" rx="1.500" ry="3.150" transform="rotate(-31 192.050 83.100)"/><path d="M179.300 80.600L183.600 76.800M190.500 80.600L186.200 76.800" stroke-width="1.700"/></g><path d="M178.100 63.100L187.300 77L184.500 78.400z" fill="#fbfbfb"/><path d="M191.700 63.100L182.500 77L185.300 78.400z" fill="#ededed"/><path d="M183.600 76.800L186.200 76.800L185.600 78.600L184.200 78.600z" fill="#fff"/><path d="M207.900 64.900H215.400L217.900 67.400V77.900H207.900z" fill="#f3f3f3"/><path d="M209 67H216.6" stroke="#c8c8c8" stroke-width=".8"/><path d="M209 68.6H216.6" stroke="#c8c8c8" stroke-width=".8"/><path d="M209 70.2H216.6" stroke="#c8c8c8" stroke-width=".8"/><path d="M209 71.8H216.6" stroke="#c8c8c8" stroke-width=".8"/><path d="M209 73.4H216.6" stroke="#c8c8c8" stroke-width=".8"/><path d="M209 75H216.6" stroke="#c8c8c8" stroke-width=".8"/><path d="M209 76.4H216.6" stroke="#c8c8c8" stroke-width=".8"/><path d="M215.800 72H222.500L226 75.500V85H215.800z" fill="#f9f9f9"/><path d="M222.500 72V75.500H226z" fill="#dcdcdc"/><path d="M217 75.4H224.8" stroke="#cacaca" stroke-width=".8"/><path d="M217 77H224.8" stroke="#cacaca" stroke-width=".8"/><path d="M217 78.6H224.8" stroke="#cacaca" stroke-width=".8"/><path d="M217 80.2H224.8" stroke="#cacaca" stroke-width=".8"/><path d="M217 81.8H224.8" stroke="#a8a8a8" stroke-width=".8"/><path d="M217 83.2H224.8" stroke="#a8a8a8" stroke-width=".8"/><rect x="240.900" y="65.700" width="16.300" height="20.300" rx="1" fill="url(#gboard)"/><rect x="246.200" y="64" width="5.400" height="2.800" rx="1.200" fill="#c9c9c9"/><rect x="244.900" y="66.200" width="8.200" height="2.900" rx=".8" fill="#b4b4b4"/><path d="M245.300 67H252.700" stroke="#e0e0e0" stroke-width=".7"/><path d="M247 70H255.800L259.800 74V85.600H247z" fill="#f5f5f5"/><path d="M255.800 70V74H259.800z" fill="#dadada"/><path d="M248.2 75.6H258.4" stroke="#bebebe" stroke-width=".8"/><path d="M248.2 77.2H258.4" stroke="#bebebe" stroke-width=".8"/><path d="M248.2 78.8H258.4" stroke="#bebebe" stroke-width=".8"/><path d="M248.2 81H258.4" stroke="#bebebe" stroke-width=".8"/><path d="M248.2 82.6H258.4" stroke="#bebebe" stroke-width=".8"/><path d="M248.2 84H258.4" stroke="#bebebe" stroke-width=".8"/><path d="M284.200 77.800L291 85.400" stroke="#9a9a9a" stroke-width="3.200" stroke-linecap="round"/><path d="M283.800 77.200L290.600 84.800" stroke="#f4f4f4" stroke-width="2" stroke-linecap="round"/><circle cx="278.6" cy="70.9" r="6.900" fill="url(#lens)" stroke="#c4c4c4" stroke-width="1"/><ellipse cx="277.6" cy="68.1" rx="3.6" ry="2.2" fill="#fff" opacity=".35"/><path d="M316.200 77.800L323 85.400" stroke="#9a9a9a" stroke-width="3.200" stroke-linecap="round"/><path d="M315.800 77.200L322.600 84.800" stroke="#f4f4f4" stroke-width="2" stroke-linecap="round"/><circle cx="310.5" cy="70.9" r="6.900" fill="url(#lens)" stroke="#c4c4c4" stroke-width="1"/><ellipse cx="309.5" cy="68.1" rx="3.6" ry="2.2" fill="#fff" opacity=".35"/><path d="M321.700 71.900L311.300 83.900" stroke="#eeb818" stroke-width="3.600"/><path d="M321.700 71.900L311.300 83.900" stroke="#3a2c08" stroke-width="1"/><path d="M322.900 70.500L321.300 72.300" stroke="#e41414" stroke-width="3.600"/><path d="M312.500 82.500L309.700 85.700L310 83.500z" fill="#d6b070"/><path d="M311.300 83.900L310.100 82.900L309.700 85.700L312.500 84.900z" fill="#d6b070"/><path d="M347.83 85.57 A11 11 0 1 0 336.37 67.93 L333.90 64.9 L333.90 74.7 L343.90 74.7 L340.56 72.75 A4.8 4.8 0 1 1 346.12 79.61 Z" fill="url(#gundo)" stroke="#b07c06" stroke-width=".7" stroke-linejoin="round"/><path d="M374.17 85.57 A11 11 0 1 1 385.63 67.93 L388.10 64.9 L388.10 74.7 L378.10 74.7 L381.44 72.75 A4.8 4.8 0 1 0 375.88 79.61 Z" fill="url(#gredo)" stroke="#0a6410" stroke-width=".7" stroke-linejoin="round"/><rect x="398.8" y="65.6" width="11.9" height="1.6" rx="0.8" fill="url(#gl)"/><rect x="405.2" y="68.85" width="13.4" height="1.9" rx="0.95" fill="url(#gl)"/><rect x="405.2" y="72.35" width="10.3" height="1.7" rx="0.85" fill="url(#gl)"/><rect x="405.2" y="75.7" width="11.5" height="1.6" rx="0.8" fill="url(#gl)"/><rect x="398.8" y="78.75" width="9" height="1.9" rx="0.95" fill="url(#gl2)"/><rect x="398.8" y="82.25" width="11.9" height="1.9" rx="0.95" fill="url(#gl)"/><path d="M404.200 70.200V76L399.800 73.100z" fill="#ea1414"/><path d="M404.200 70.200V72.600L401.600 72z" fill="#f08080"/><rect x="430.8" y="65.6" width="11.9" height="1.6" rx="0.8" fill="url(#gl)"/><rect x="437.2" y="68.85" width="13.4" height="1.9" rx="0.95" fill="url(#gl)"/><rect x="437.2" y="72.35" width="10.3" height="1.7" rx="0.85" fill="url(#gl)"/><rect x="437.2" y="75.7" width="11.5" height="1.6" rx="0.8" fill="url(#gl)"/><rect x="430.8" y="78.75" width="9" height="1.9" rx="0.95" fill="url(#gl2)"/><rect x="430.8" y="82.25" width="11.9" height="1.9" rx="0.95" fill="url(#gl)"/><path d="M431.500 70.200V76L435.800 73.100z" fill="#74dc12"/><circle cx="472.400" cy="74.250" r="9.800" fill="#1b3658"/><circle cx="472.400" cy="74.250" r="9.200" fill="url(#gglobe)"/><path d="M465.200 69.200q1.800-2.800 4.800-3.800l2 .4-.8 2.200-2.200 1.400 1.600 2.200-1 2.400-2 .6-.2 3.800-1.600-1.600-1.400-3.800z" fill="#bcd2e6" opacity=".72"/><path d="M467.200 77.200l2.600 .4 1.200 2.600-1.400 2.600-1.600-2.200z" fill="#b4cce2"/><path d="M474.200 65.400q4 .6 6.400 4.200l.8 3.600-1.600 .4-.8 2.400-1.600 1 .2 2.600-1.800 2-1.600-2.600 .4-3-2-1.800 .8-2.800 1.800-1-1.600-2.200z" fill="#bcd2e6" opacity=".72"/><path d="M514.200 66L505 75.200" stroke="#e2e2dc" stroke-width="2"/><path d="M515.400 66.600L513.400 64.800L511.800 67.600L512.800 68.600z" fill="#e2e2dc"/><path d="M503.300 76.500L496.700 82.500" stroke="#234f96" stroke-width="5.600" stroke-linecap="round"/><path d="M503.500 76.300L496.900 82.100" stroke="#4f8fe2" stroke-width="3.200" stroke-linecap="round"/><path d="M502.800 75.600L496.600 81.100" stroke="#b4d2f6" stroke-width=".9" stroke-linecap="round"/><path d="M499.200 70L511.400 81" stroke="#d6d6ce" stroke-width="3.200"/><path d="M497.490 65.800A2.800 2.800 0 1 1 494.630 68.790" stroke="#d6d6ce" stroke-width="2.800" fill="none"/><path d="M513.110 85.400A2.800 2.800 0 1 1 515.970 82.410" stroke="#d6d6ce" stroke-width="2.800" fill="none"/><rect x="526" y="65.200" width="22.100" height="19.500" rx=".8" fill="#f1f1f1"/><rect x="526" y="65.200" width="22.100" height="5.200" fill="#d9d9d9"/><path d="M526 84.300H548.100" stroke="#c4c4c4" stroke-width=".8"/><circle cx="540.200" cy="67.900" r="1.150" fill="#e23030"/><circle cx="543.300" cy="67.900" r="1.150" fill="#e0b020"/><circle cx="546.200" cy="67.900" r="1.150" fill="#38c038"/><rect x="527.600" y="66.900" width="2.200" height="1.800" fill="#777"/><g fill="#c61616"><path d="M527.600 72.200h3.600l-1.100 1.100 2.300 2.300-1.300 1.300-2.300-2.300-1.200 1.200z"/><path d="M546.600 72.200v3.600l-1.100-1.100-2.300 2.300-1.300-1.300 2.300-2.300-1.200-1.200z"/><path d="M527.600 82.900v-3.600l1.100 1.100 2.300-2.300 1.300 1.300-2.300 2.300 1.200 1.200z"/><path d="M546.600 82.900h-3.600l1.100-1.100-2.300-2.300 1.300-1.300 2.300 2.300 1.200-1.200z"/></g></svg>
</body></html>
